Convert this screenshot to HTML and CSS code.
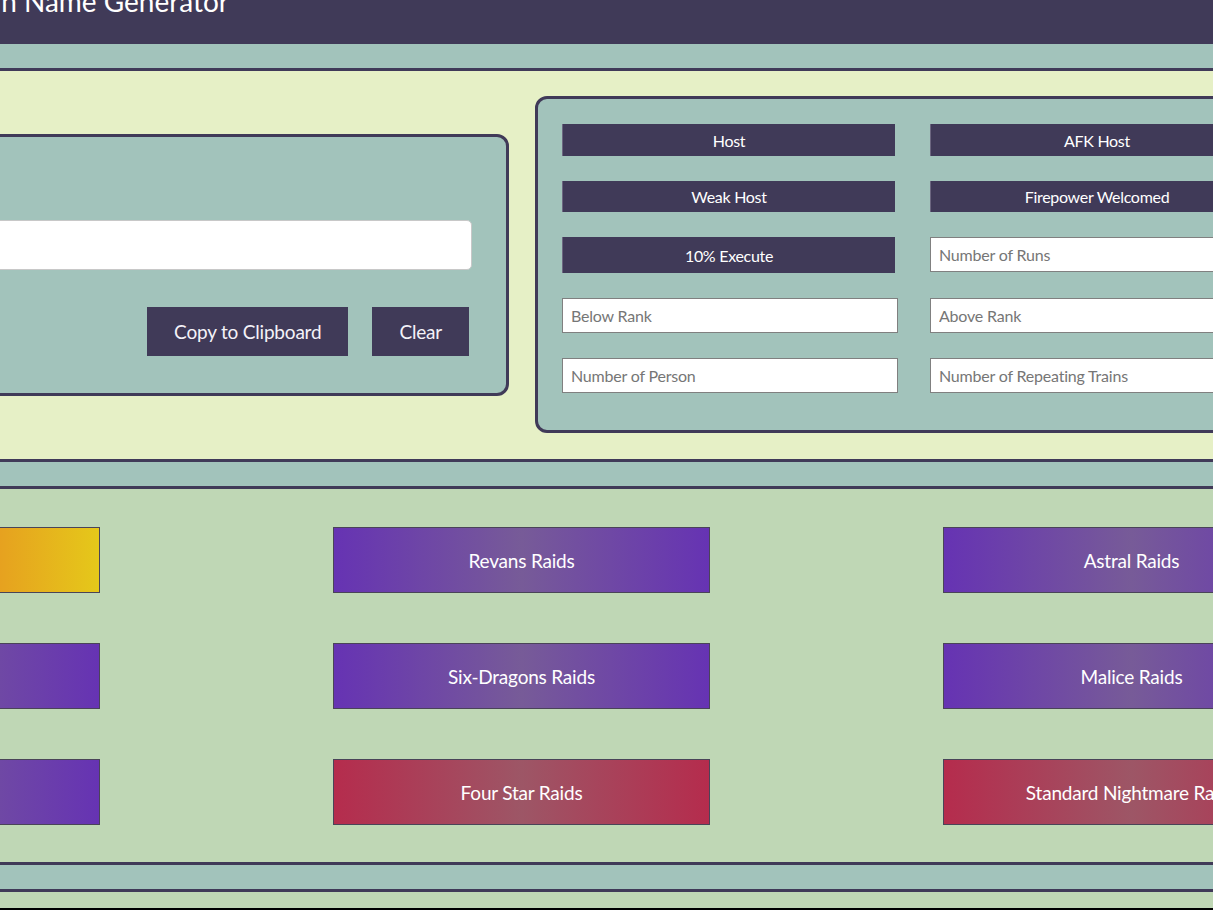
FILE: index.html
```html
<!DOCTYPE html>
<html lang="en">
<head>
<meta charset="utf-8">
<title>Raid Train Name Generator</title>
<link rel="stylesheet" href="styles.css">
</head>
<body>
<header class="topbar">
  <div class="title-wrap">
    <h1 class="title">Raid Train Name Generator</h1>
  </div>
</header>
<main class="page">
  <section class="band band-pale">
    <div class="output-card">
      <input class="name-output" type="text" readonly aria-label="Generated name">
      <div class="output-actions">
        <button class="btn" type="button">Copy to Clipboard</button>
        <button class="btn" type="button">Clear</button>
      </div>
    </div>
    <div class="options-card">
      <button class="opt" type="button">Host</button>
      <button class="opt" type="button">AFK Host</button>
      <button class="opt" type="button">Weak Host</button>
      <button class="opt" type="button">Firepower Welcomed</button>
      <button class="opt" type="button">10% Execute</button>
      <input class="opt-input" type="text" placeholder="Number of Runs">
      <input class="opt-input" type="text" placeholder="Below Rank">
      <input class="opt-input" type="text" placeholder="Above Rank">
      <input class="opt-input" type="text" placeholder="Number of Person">
      <input class="opt-input" type="text" placeholder="Number of Repeating Trains">
    </div>
  </section>

  <section class="band band-green">
    <div class="raids">
      <button class="raid raid-gold" type="button">Legendary Raids</button>
      <button class="raid raid-purple" type="button">Revans Raids</button>
      <button class="raid raid-purple" type="button">Astral Raids</button>
      <button class="raid raid-purple" type="button">Rift Raids</button>
      <button class="raid raid-purple" type="button">Six-Dragons Raids</button>
      <button class="raid raid-purple" type="button">Malice Raids</button>
      <button class="raid raid-purple" type="button">Mythic Raids</button>
      <button class="raid raid-red" type="button">Four Star Raids</button>
      <button class="raid raid-red" type="button">Standard Nightmare Raids</button>
    </div>
  </section>

  <section class="band band-green band-tail">
    <div class="tail-bar"></div>
  </section>
</main>
</body>
</html>
```

FILE: styles.css
```css
html, body {
  margin: 0;
  padding: 0;
}

body {
  background: #a2c3bb;
  font-family: "Lato", "Open Sans", sans-serif;
  color: #ffffff;
  overflow: hidden;
  height: 910px;
}

.topbar {
  height: 44px;
  background: #403a58;
  overflow: hidden;
}

.title-wrap {
  width: 229px;
  display: flex;
  justify-content: flex-end;
}

.title {
  flex: none;
  margin: -13px 0 0 0;
  font-size: 28px;
  line-height: 28px;
  font-weight: 400;
  color: #ffffff;
  white-space: nowrap;
}

.page {
  display: flex;
  flex-direction: column;
  gap: 24px;
  padding-top: 24px;
}

.band {
  border-top: 3px solid #403a58;
  border-bottom: 3px solid #403a58;
  overflow: hidden;
}

.band-pale {
  background: #e6f0c6;
  height: 388px;
  display: flex;
  align-items: center;
  gap: 26px;
}

.band-green {
  background: #bfd7b5;
}

/* left output card */
.output-card {
  flex: 0 0 600px;
  box-sizing: border-box;
  margin-left: -91px;
  height: 262px;
  border: 3px solid #403a58;
  border-radius: 12px;
  background: #a2c3bb;
  padding: 83px 34px 37px 34px;
  display: flex;
  flex-direction: column;
  gap: 37px;
}

.name-output {
  box-sizing: border-box;
  width: 100%;
  height: 50px;
  border: 1px solid #c8c8c8;
  border-radius: 5px;
  background: #ffffff;
  font-family: inherit;
  font-size: 18px;
  padding: 0 12px;
}

.output-actions {
  display: flex;
  justify-content: flex-end;
  gap: 24px;
  padding-right: 3px;
}

.btn {
  height: 49px;
  padding: 0 27px;
  border: none;
  background: #403a58;
  color: #f4f2f8;
  font-family: inherit;
  font-size: 19px;
  letter-spacing: -0.2px;
}

/* right options card */
.options-card {
  flex: 0 0 auto;
  box-sizing: border-box;
  margin-top: -1px;
  border: 3px solid #403a58;
  border-radius: 12px;
  background: #a2c3bb;
  padding: 25px 24px 37px 24px;
  display: grid;
  grid-template-columns: 333px 333px;
  grid-template-rows: 32px 31px 36px 35px 35px;
  column-gap: 35px;
  row-gap: 25px;
}

.opt {
  border: none;
  border-left: 1px solid #6c6680;
  background: #403a58;
  color: #ffffff;
  font-family: inherit;
  font-size: 16px;
  letter-spacing: -0.3px;
  padding: 0;
}

.opt-input {
  box-sizing: border-box;
  width: 336px;
  height: 35px;
  justify-self: start;
  border: 1px solid #808080;
  background: #ffffff;
  font-family: inherit;
  font-size: 16px;
  letter-spacing: -0.2px;
  padding: 0 8px;
  color: #333;
}

.opt-input::placeholder {
  color: #767676;
}

/* raid buttons */
.raids {
  display: grid;
  grid-template-columns: repeat(3, 377px);
  grid-auto-rows: 66px;
  column-gap: 233px;
  row-gap: 50px;
  margin-left: -277px;
  padding: 38px 0 37px 0;
}

.raid {
  box-sizing: border-box;
  border: 1px solid #4a4458;
  color: #ffffff;
  font-family: inherit;
  font-size: 19px;
  letter-spacing: -0.2px;
  white-space: nowrap;
  padding: 0;
}

.raid-purple {
  background: linear-gradient(90deg, #6633b3, #775b98, #6633b3);
}

.raid-red {
  background: linear-gradient(90deg, #b52c4d, #9d5666, #b52c4d);
}

.raid-gold {
  background: linear-gradient(90deg, #e5c81a, #e77f24, #e5c81a);
}

.band-tail {
  border-bottom: none;
  padding-top: 16px;
}

.tail-bar {
  height: 20px;
  background: #000000;
}
```
